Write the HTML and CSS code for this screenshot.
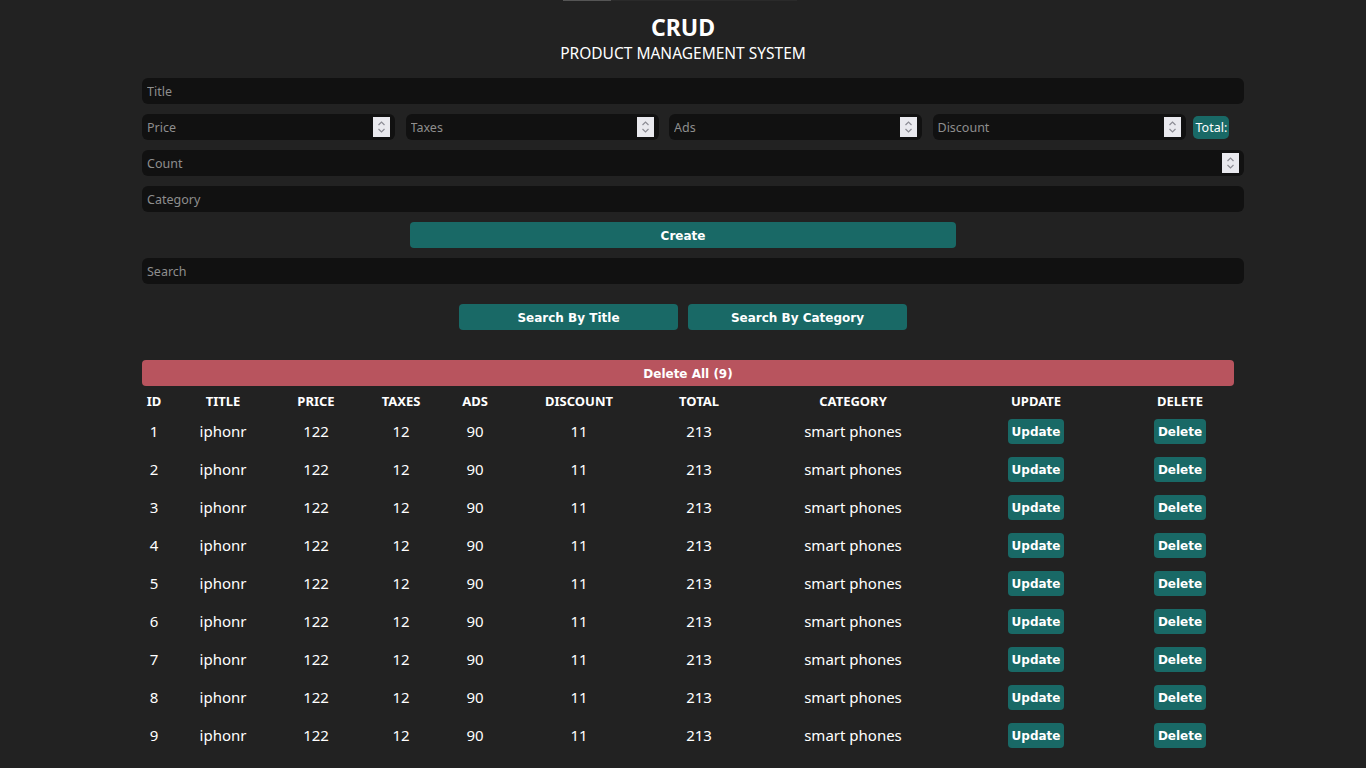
FILE: index.html
```html
<!DOCTYPE html>
<html lang="en">
<head>
<meta charset="utf-8">
<title>CRUD</title>
<link rel="stylesheet" href="styles.css">
</head>
<body>
<div class="topbar"><span class="thumb"></span><span class="track"></span></div>
<header class="head">
  <h1>CRUD</h1>
  <p>PRODUCT MANAGEMENT SYSTEM</p>
</header>
<main class="page">
  <div class="field"><input class="inp" type="text" placeholder="Title"></div>
  <div class="price-row">
    <div class="field num"><input class="inp" type="text" placeholder="Price"><span class="spin"><svg viewBox="0 0 17 20" width="17" height="20"><path d="M5.5 8 L8.5 5 L11.5 8 M5.5 12 L8.5 15 L11.5 12" fill="none" stroke="#8c8c94" stroke-width="1.2"/></svg></span></div>
    <div class="field num"><input class="inp" type="text" placeholder="Taxes"><span class="spin"><svg viewBox="0 0 17 20" width="17" height="20"><path d="M5.5 8 L8.5 5 L11.5 8 M5.5 12 L8.5 15 L11.5 12" fill="none" stroke="#8c8c94" stroke-width="1.2"/></svg></span></div>
    <div class="field num"><input class="inp" type="text" placeholder="Ads"><span class="spin"><svg viewBox="0 0 17 20" width="17" height="20"><path d="M5.5 8 L8.5 5 L11.5 8 M5.5 12 L8.5 15 L11.5 12" fill="none" stroke="#8c8c94" stroke-width="1.2"/></svg></span></div>
    <div class="field num"><input class="inp" type="text" placeholder="Discount"><span class="spin"><svg viewBox="0 0 17 20" width="17" height="20"><path d="M5.5 8 L8.5 5 L11.5 8 M5.5 12 L8.5 15 L11.5 12" fill="none" stroke="#8c8c94" stroke-width="1.2"/></svg></span></div>
    <small class="total">Total:</small>
  </div>
  <div class="field num"><input class="inp" type="text" placeholder="Count"><span class="spin"><svg viewBox="0 0 17 20" width="17" height="20"><path d="M5.5 8 L8.5 5 L11.5 8 M5.5 12 L8.5 15 L11.5 12" fill="none" stroke="#8c8c94" stroke-width="1.2"/></svg></span></div>
  <div class="field"><input class="inp" type="text" placeholder="Category"></div>
  <div class="btn-row"><button class="btn create">Create</button></div>
  <div class="field"><input class="inp" type="text" placeholder="Search"></div>
  <div class="btn-row search-row">
    <button class="btn search">Search By Title</button>
    <button class="btn search">Search By Category</button>
  </div>
  <button class="delete-all">Delete All (9)</button>
  <table class="tbl">
    <colgroup>
      <col style="width:24px"><col style="width:114px"><col style="width:72px"><col style="width:98px"><col style="width:50px"><col style="width:158px"><col style="width:82px"><col style="width:226px"><col style="width:140px"><col style="width:148px">
    </colgroup>
    <thead>
      <tr><th>ID</th><th>TITLE</th><th>PRICE</th><th>TAXES</th><th>ADS</th><th>DISCOUNT</th><th>TOTAL</th><th>CATEGORY</th><th>UPDATE</th><th>DELETE</th></tr>
    </thead>
    <tbody>
      <tr><td>1</td><td>iphonr</td><td>122</td><td>12</td><td>90</td><td>11</td><td>213</td><td>smart phones</td><td><button class="sm">Update</button></td><td><button class="sm">Delete</button></td></tr>
      <tr><td>2</td><td>iphonr</td><td>122</td><td>12</td><td>90</td><td>11</td><td>213</td><td>smart phones</td><td><button class="sm">Update</button></td><td><button class="sm">Delete</button></td></tr>
      <tr><td>3</td><td>iphonr</td><td>122</td><td>12</td><td>90</td><td>11</td><td>213</td><td>smart phones</td><td><button class="sm">Update</button></td><td><button class="sm">Delete</button></td></tr>
      <tr><td>4</td><td>iphonr</td><td>122</td><td>12</td><td>90</td><td>11</td><td>213</td><td>smart phones</td><td><button class="sm">Update</button></td><td><button class="sm">Delete</button></td></tr>
      <tr><td>5</td><td>iphonr</td><td>122</td><td>12</td><td>90</td><td>11</td><td>213</td><td>smart phones</td><td><button class="sm">Update</button></td><td><button class="sm">Delete</button></td></tr>
      <tr><td>6</td><td>iphonr</td><td>122</td><td>12</td><td>90</td><td>11</td><td>213</td><td>smart phones</td><td><button class="sm">Update</button></td><td><button class="sm">Delete</button></td></tr>
      <tr><td>7</td><td>iphonr</td><td>122</td><td>12</td><td>90</td><td>11</td><td>213</td><td>smart phones</td><td><button class="sm">Update</button></td><td><button class="sm">Delete</button></td></tr>
      <tr><td>8</td><td>iphonr</td><td>122</td><td>12</td><td>90</td><td>11</td><td>213</td><td>smart phones</td><td><button class="sm">Update</button></td><td><button class="sm">Delete</button></td></tr>
      <tr><td>9</td><td>iphonr</td><td>122</td><td>12</td><td>90</td><td>11</td><td>213</td><td>smart phones</td><td><button class="sm">Update</button></td><td><button class="sm">Delete</button></td></tr>
    </tbody>
  </table>
</main>
</body>
</html>
```
FILE: styles.css
```css
* { box-sizing: border-box; }
html, body { margin: 0; padding: 0; }
body {
  background: #222222;
  color: #ffffff;
  font-family: "Noto Sans", "Open Sans", sans-serif;
  height: 768px;
  overflow: hidden;
}
.topbar { display: flex; justify-content: flex-start; padding-left: 563px; height: 1px; }
.topbar .thumb { width: 48px; height: 1px; background: #555555; }
.topbar .track { width: 186px; height: 1px; background: #2a2a2a; }
.head { text-align: center; padding-top: 10px; }
.head h1 { margin: 0; font-size: 23px; font-weight: 700; line-height: 32px; }
.head p { margin: -1px 0 0; font-size: 15.5px; line-height: 22px; }
.page { padding: 14px 122px 0 142px; display: flex; flex-direction: column; gap: 10px; }
.field { position: relative; }
.inp {
  display: block;
  width: 100%;
  height: 26px;
  background: #111111;
  border: none;
  border-radius: 6px;
  outline: none;
  color: #dddddd;
  font-family: "Noto Sans", "Open Sans", sans-serif;
  font-size: 12.5px;
  padding: 0 5px;
}
.inp::placeholder { color: #8e8e8e; }
.spin {
  position: absolute;
  right: 5px;
  top: 3px;
  width: 17px;
  height: 20px;
  background: #e9e9ee;
  display: flex;
}
.price-row { display: flex; align-items: center; gap: 10.5px; padding-right: 15px; }
.price-row .field { flex: 0 0 253px; }
.total {
  margin-left: -3.5px;
  background: #196966;
  border-radius: 5px;
  height: 23px;
  width: 37px;
  font-size: 12.5px;
  line-height: 23px;
  padding-left: 3px;
  white-space: nowrap;
}
.btn-row { display: flex; justify-content: center; gap: 10px; padding-right: 20px; }
.btn {
  background: #196966;
  color: #ffffff;
  border: none;
  border-radius: 4px;
  height: 26px;
  font-family: "DejaVu Sans", sans-serif;
  font-weight: 700;
  font-size: 12px;
  padding: 1px 0 0;
}
.create { width: 546px; }
.search-row { margin-top: 10px; }
.search { width: 219px; }
.delete-all {
  margin-top: 20px;
  width: 1092px;
  height: 26px;
  background: #b8545e;
  color: #ffffff;
  border: none;
  border-radius: 4px;
  font-family: "DejaVu Sans", sans-serif;
  font-weight: 700;
  font-size: 12px;
  padding: 1px 0 0;
}
.tbl {
  margin-top: -6px;
  width: 1112px;
  table-layout: fixed;
  border-collapse: collapse;
}
.tbl th {
  height: 22px;
  padding: 0;
  font-size: 13px;
  font-weight: 700;
  text-align: center;
  vertical-align: middle;
}
.tbl td {
  height: 38px;
  padding: 0;
  font-size: 15px;
  text-align: center;
  vertical-align: middle;
  white-space: nowrap;
}
.sm {
  background: #196966;
  color: #ffffff;
  border: none;
  border-radius: 4px;
  height: 25px;
  padding: 1px 4px 0;
  font-family: "DejaVu Sans", sans-serif;
  font-weight: 700;
  font-size: 12px;
}
```
